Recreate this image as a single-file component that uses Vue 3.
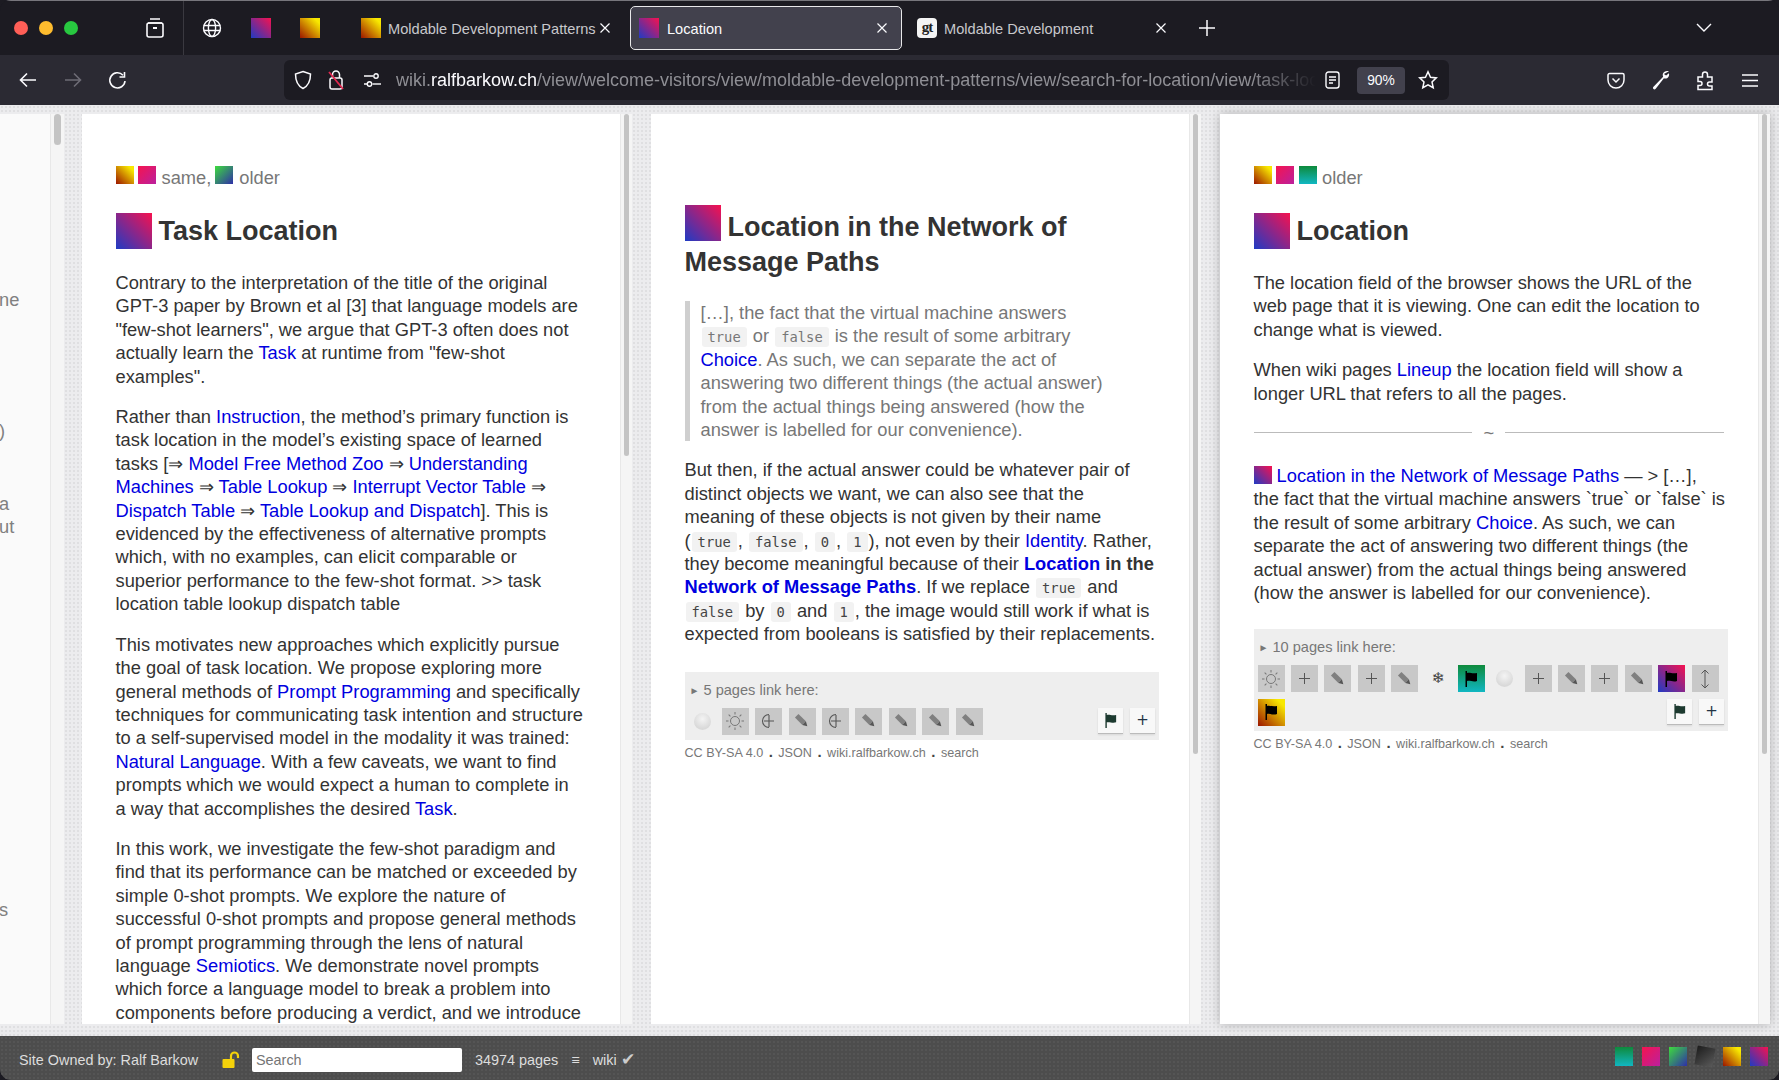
<script setup>
const leftLines = [
  { t: 'ne', gap: 173 },
  { t: ')', gap: 108 },
  { t: 'a', gap: 49 },
  { t: 'ut', gap: 0 },
  { t: 's', gap: 359 },
]
const links2 = [
  { k: 'orb' }, { k: 'sun' }, { k: 'arc' }, { k: 'pen' }, { k: 'arc' }, { k: 'pen' }, { k: 'pen' }, { k: 'pen' }, { k: 'pen' },
]
const links3 = [
  { k: 'sun' }, { k: 'plus' }, { k: 'pen' }, { k: 'plus' }, { k: 'pen' }, { k: 'snow' }, { k: 'flag', g: 'g-teal' }, { k: 'orb' },
  { k: 'plus' }, { k: 'pen' }, { k: 'plus' }, { k: 'pen' }, { k: 'flag', g: 'g-loc' }, { k: 'arrows' }, { k: 'flag', g: 'g-yellow' },
]
const factories = { two: links2, three: links3 }
const rays = [0, 45, 90, 135, 180, 225, 270, 315]
</script>

<template>
  <div class="window">
    <header class="tabbar">
      <div class="lights">
        <i class="light red"></i><i class="light amber"></i><i class="light green"></i>
      </div>
      <svg class="ico archive" width="20" height="22" viewBox="0 0 20 22" fill="none" stroke="#fbfbfe" stroke-width="1.6">
        <path d="M5 2h10M3 6h14" /><rect x="2" y="6" width="16" height="14" rx="2" /><path d="M8 11h4" stroke-width="2" />
      </svg>
      <div class="divider"></div>
      <svg class="ico globe" width="20" height="20" viewBox="0 0 20 20" fill="none" stroke="#fbfbfe" stroke-width="1.4">
        <circle cx="10" cy="10" r="8.5" /><ellipse cx="10" cy="10" rx="3.6" ry="8.5" /><path d="M1.5 7.5h17M1.5 12.5h17" />
      </svg>
      <i class="fav g-loc pin1"></i>
      <i class="fav g-yellow pin2"></i>
      <div class="tab t1">
        <i class="fav g-yellow"></i><span class="tab-title">Moldable Development Patterns</span>
        <svg class="x" width="12" height="12" viewBox="0 0 12 12" stroke="#fbfbfe" stroke-width="1.2"><path d="M1.5 1.5l9 9M10.5 1.5l-9 9" /></svg>
      </div>
      <div class="tab active">
        <i class="fav g-loc"></i><span class="tab-title">Location</span>
        <svg class="x" width="12" height="12" viewBox="0 0 12 12" stroke="#fbfbfe" stroke-width="1.2"><path d="M1.5 1.5l9 9M10.5 1.5l-9 9" /></svg>
      </div>
      <div class="tab t3">
        <i class="fav gt">gt</i><span class="tab-title">Moldable Development</span>
        <svg class="x" width="12" height="12" viewBox="0 0 12 12" stroke="#fbfbfe" stroke-width="1.2"><path d="M1.5 1.5l9 9M10.5 1.5l-9 9" /></svg>
      </div>
      <svg class="ico newtab" width="16" height="16" viewBox="0 0 16 16" stroke="#fbfbfe" stroke-width="1.5"><path d="M8 0v16M0 8h16" /></svg>
      <svg class="ico chevron" width="16" height="10" viewBox="0 0 16 10" fill="none" stroke="#fbfbfe" stroke-width="1.4"><path d="M1 1l7 7 7-7" /></svg>
    </header>

    <nav class="toolbar">
      <svg class="ico back" width="18" height="16" viewBox="0 0 18 16" fill="none" stroke="#fbfbfe" stroke-width="1.6"><path d="M17 8H2M8 1.5L1.5 8 8 14.5" /></svg>
      <svg class="ico fwd" width="18" height="16" viewBox="0 0 18 16" fill="none" stroke="#6d6c75" stroke-width="1.6"><path d="M1 8h15M10 1.5L16.5 8 10 14.5" /></svg>
      <svg class="ico reload" width="19" height="19" viewBox="0 0 19 19" fill="none" stroke="#fbfbfe" stroke-width="1.6"><path d="M15 4.2A7.6 7.6 0 1 0 17 10" /><path d="M16.5 1v5h-5" /></svg>
      <div class="urlbar">
        <svg class="ico shield" width="18" height="20" viewBox="0 0 18 20" fill="none" stroke="#fbfbfe" stroke-width="1.5"><path d="M9 1.5l7.5 2.5c0 7-1.500 11.500-7.500 14.500C3 15.500 1.500 11 1.500 4z" /></svg>
        <svg class="ico lock" width="18" height="22" viewBox="0 0 18 22" fill="none" stroke-width="1.5"><rect x="3" y="9" width="12" height="11" rx="2" stroke="#fbfbfe" /><path d="M5.500 9V5.500a3.500 3.500 0 0 1 7 0V9" stroke="#fbfbfe" /><path d="M2 3l14 17" stroke="#e22850" stroke-width="1.800" /></svg>
        <svg class="ico tune" width="19" height="14" viewBox="0 0 19 14" fill="none" stroke="#fbfbfe" stroke-width="1.400"><circle cx="13" cy="3" r="2.200" /><path d="M1 3h9M1 11h3" /><circle cx="6.500" cy="11" r="2.200" /><path d="M9.500 11H18" /></svg>
        <div class="url"><span class="dim">wiki.</span><b>ralfbarkow.ch</b><span class="dim">/view/welcome-visitors/view/moldable-development-patterns/view/search-for-location/view/task-location</span></div>
        <svg class="ico reader" width="15" height="18" viewBox="0 0 15 18" fill="none" stroke="#fbfbfe" stroke-width="1.400"><rect x="1" y="1" width="13" height="16" rx="2.500" /><path d="M4 6h7M4 9h7M4 12h4" /></svg>
        <div class="zoompill">90%</div>
        <svg class="ico star" width="20" height="20" viewBox="0 0 20 20" fill="none" stroke="#fbfbfe" stroke-width="1.500"><path d="M10 1.800l2.500 5.400 5.800.7-4.300 4 1.200 5.800L10 14.800l-5.200 2.900L6 11.900l-4.300-4 5.800-.7z" /></svg>
      </div>
      <svg class="ico pocket" width="18" height="17" viewBox="0 0 18 17" fill="none" stroke="#fbfbfe" stroke-width="1.500"><path d="M2.500 1.500h13a1.500 1.500 0 0 1 1.500 1.500v5a8 8 0 0 1-16 0V3a1.500 1.500 0 0 1 1.500-1.500z" /><path d="M5.500 6.500L9 10l3.500-3.500" /></svg>
      <svg class="ico wrench" width="18" height="20" viewBox="0 0 18 20" fill="#fbfbfe"><path d="M17 1.200c-2.500-.8-5.200 0-6 2.300-.4 1.100-.3 2.300.2 3.300L1.500 16.800c-.7.800-.7 1.700 0 2.300.7.500 1.500.4 2.200-.4l8.200-10.400c2.200.7 4.300-.4 5-2.400.3-.9.300-1.800 0-2.600l-2.800 2.200-2.200-1.500z" /></svg>
      <svg class="ico puzzle" width="19" height="21" viewBox="0 0 19 21" fill="none" stroke="#fbfbfe" stroke-width="1.500"><path d="M2 7h4.500V4.500a2.500 2.500 0 0 1 5 0V7H16v5h-2.500a2 2 0 0 0 0 4H16v3.500H2v-4h2a2 2 0 0 0 0-4H2z" /></svg>
      <svg class="ico menu" width="16" height="13" viewBox="0 0 16 13" stroke="#fbfbfe" stroke-width="1.500"><path d="M0 1h16M0 6.500h16M0 12h16" /></svg>
    </nav>

    <main class="neighborhood">
      <section class="stub">
        <div class="stub-page">
          <div v-for="l in leftLines" :key="l.t" class="stub-line" :style="{ marginTop: l.gap + 'px' }">{{ l.t }}</div>
        </div>
        <div class="track"><i class="thumb" style="height: 31px"></i></div>
      </section>

      <section class="pane">
        <article class="page">
          <div class="flags">
            <i class="mini g-yellow"></i><i class="mini g-pink"></i><span class="muted">same,</span><i class="mini g-greenblue"></i><span class="muted">older</span>
          </div>
          <h3 class="title"><i class="big g-loc"></i>Task Location</h3>
          <p>Contrary to the interpretation of the title of the original <span class="nowrap">GPT-3</span> paper by Brown et al [3] that language models are <span class="nowrap">"few-shot</span> learners", we argue that <span class="nowrap">GPT-3</span> often does not actually learn the <a>Task</a> at runtime from <span class="nowrap">"few-shot</span> examples".</p>
          <p>Rather than <a>Instruction</a>, the method’s primary function is task location in the model’s existing space of learned tasks [⇒ <a>Model Free Method Zoo</a> ⇒ <a>Understanding Machines</a> ⇒ <a>Table Lookup</a> ⇒ <a>Interrupt Vector Table</a> ⇒ <a>Dispatch Table</a> ⇒ <a>Table Lookup and Dispatch</a>]. This is evidenced by the effectiveness of alternative prompts which, with no examples, can elicit comparable or superior performance to the few-shot format. &gt;&gt; task location table lookup dispatch table</p>
          <p>This motivates new approaches which explicitly pursue the goal of task location. We propose exploring more general methods of <a>Prompt Programming</a> and specifically techniques for communicating task intention and structure to a self-supervised model in the modality it was trained: <a>Natural Language</a>. With a few caveats, we want to find prompts which we would expect a human to complete in <span class="nowrap">a way</span> that accomplishes the desired <a>Task</a>.</p>
          <p>In this work, we investigate the few-shot paradigm and find that its performance can be matched or exceeded by simple 0-shot prompts. We explore the nature of successful 0-shot prompts and propose general methods of prompt programming through the lens of natural language <a>Semiotics</a>. We demonstrate novel prompts which force a language model to break a problem into components before producing a verdict, and we introduce</p>
        </article>
        <div class="track"><i class="thumb" style="height: 342px"></i></div>
      </section>

      <section class="pane">
        <article class="page second">
          <h3 class="title wrap"><i class="big g-loc"></i>Location in the Network of Message Paths</h3>
          <blockquote>[…], the fact that the virtual machine answers <code>true</code> or <code>false</code> is the result of some arbitrary <a>Choice</a>. As such, we can separate the act of answering two different things (the actual answer) from the actual things being answered (how the answer is labelled for our convenience).</blockquote>
          <p>But then, if the actual answer could be whatever pair of distinct objects we want, we can also see that the meaning of these objects is not given by their name (<code>true</code>, <code>false</code>, <code>0</code>, <code>1</code>), not even by their <a>Identity</a>. Rather, they become meaningful because of their <strong><a>Location</a> in the <a>Network of Message Paths</a></strong>. If we replace <code>true</code> and <code>false</code> by <code>0</code> and <code>1</code>, the image would still work if what is expected from booleans is satisfied by their replacements.</p>
          <div class="factory f2">
            <div class="factory-head"><span class="tri">►</span> 5 pages link here:</div>
            <div class="chips">
              <template v-for="(c, i) in factories.two" :key="i">
                <i v-if="c.k === 'orb'" class="chip orb"></i>
                <i v-else class="chip">
                  <svg v-if="c.k === 'arc'" width="16" height="18" viewBox="0 0 16 18" fill="none" stroke="#555" stroke-width="1.100"><path d="M8 2.500a6.500 6.500 0 0 0 0 13" /><path d="M3 9h10M8 3v12" /></svg>
                  <svg v-else-if="c.k === 'pen'" width="18" height="18" viewBox="0 0 18 18"><g transform="rotate(-45 9 9)"><rect x="6.500" y="1.500" width="5" height="10.500" fill="#808080" /><path d="M6.500 12h5L9 16.500z" fill="#555" /></g></svg>
                  <svg v-else width="20" height="20" viewBox="0 0 20 20" fill="none" stroke="#777" stroke-width="1"><circle cx="10" cy="10" r="4.500" /><path v-for="r in rays" :key="r" d="M10 3.500V1" :transform="`rotate(${r} 10 10)`" /></svg>
                </i>
              </template>
              <div class="actions">
                <i class="act"><svg width="14" height="15" viewBox="0 0 15 16"><path d="M1.500 0h1.500v2c3-1 5 1.200 10 0v8c-4 1.500-7-1-10 0v6H1.500z" fill="#1d3a30" /></svg></i>
                <i class="act">+</i>
              </div>
            </div>
          </div>
          <div class="license">CC BY-SA 4.0 <b>.</b> JSON <b>.</b> wiki.ralfbarkow.ch <b>.</b> search</div>
        </article>
        <div class="track"><i class="thumb" style="height: 640px"></i></div>
      </section>

      <section class="pane active-pane">
        <article class="page">
          <div class="flags tight">
            <i class="mini g-yellow"></i><i class="mini g-pink"></i><i class="mini g-teal"></i><span class="muted">older</span>
          </div>
          <h3 class="title"><i class="big g-loc"></i>Location</h3>
          <p>The location field of the browser shows the URL of the web page that it is viewing. One can edit the location to change what is viewed.</p>
          <p>When wiki pages <a>Lineup</a> the location field will show a longer URL that refers to all the pages.</p>
          <div class="sep"><span></span><em>~</em><span></span></div>
          <p class="ref"><i class="mini g-loc inline"></i> <a>Location in the Network of Message Paths</a> — &gt; […], the fact that the virtual machine answers `true` or `false` is the result of some arbitrary <a>Choice</a>. As such, we can separate the act of answering two different things (the actual answer) from the actual things being answered (how the answer is labelled for our convenience).</p>
          <div class="factory f3">
            <div class="factory-head"><span class="tri">►</span> 10 pages link here:</div>
            <div class="chips">
              <template v-for="(c, i) in factories.three" :key="i">
                <i v-if="c.k === 'orb'" class="chip orb"></i>
                <i v-else-if="c.k === 'snow'" class="chip plain">❄</i>
                <i v-else class="chip" :class="c.g">
                  <svg v-if="c.k === 'pen'" width="18" height="18" viewBox="0 0 18 18"><g transform="rotate(-45 9 9)"><rect x="6.500" y="1.500" width="5" height="10.500" fill="#808080" /><path d="M6.500 12h5L9 16.500z" fill="#555" /></g></svg>
                  <svg v-else-if="c.k === 'sun'" width="20" height="20" viewBox="0 0 20 20" fill="none" stroke="#777" stroke-width="1"><circle cx="10" cy="10" r="4.500" /><path v-for="r in rays" :key="r" d="M10 3.500V1" :transform="`rotate(${r} 10 10)`" /></svg>
                  <svg v-else-if="c.k === 'plus'" width="11" height="11" viewBox="0 0 11 11" stroke="#555" stroke-width="1"><path d="M5.500 0v11M0 5.500h11" /></svg>
                  <svg v-else-if="c.k === 'flag'" width="15" height="16" viewBox="0 0 15 16"><path d="M1.500 0h1.500v2c3-1 5 1.200 10 0v8c-4 1.500-7-1-10 0v6H1.500z" fill="#000" /></svg>
                  <svg v-else width="10" height="20" viewBox="0 0 10 20" fill="none" stroke="#555" stroke-width="1"><path d="M5 1v18M1.500 4.500L5 1l3.500 3.500M1.500 15.500L5 19l3.500-3.500" /></svg>
                </i>
              </template>
              <div class="actions">
                <i class="act"><svg width="14" height="15" viewBox="0 0 15 16"><path d="M1.500 0h1.500v2c3-1 5 1.200 10 0v8c-4 1.500-7-1-10 0v6H1.500z" fill="#1d3a30" /></svg></i>
                <i class="act">+</i>
              </div>
            </div>
          </div>
          <div class="license">CC BY-SA 4.0 <b>.</b> JSON <b>.</b> wiki.ralfbarkow.ch <b>.</b> search</div>
        </article>
        <div class="track"><i class="thumb" style="height: 640px"></i></div>
      </section>
    </main>

    <footer class="status">
      <span class="owner">Site Owned by: Ralf Barkow</span>
      <svg class="padlock" width="18" height="18" viewBox="0 0 18 18"><rect x="0.500" y="8" width="12" height="9" rx="1" fill="#f5d20a" /><path d="M9 8V5a3.500 3.500 0 0 1 7 0v2" fill="none" stroke="#f5d20a" stroke-width="2.200" /></svg>
      <div class="search">Search</div>
      <span class="count">34974 pages</span>
      <span class="burger">≡</span>
      <span class="wiki">wiki <em>✔</em></span>
      <div class="neigh">
        <i class="nb g-teal"></i><i class="nb g-pink"></i><i class="nb g-greenblue"></i><i class="nb g-dark"></i><i class="nb g-yellow"></i><i class="nb g-loc"></i>
      </div>
    </footer>
  </div>
</template>

<style>
html, body { margin: 0; background: #1c1b22; overflow: hidden; }
</style>

<style scoped>
.window {
  width: 1779px; height: 1080px; display: flex; flex-direction: column; overflow: hidden;
  border-radius: 11px; background: #1c1b22; font-family: "Liberation Sans", Arial, sans-serif;
}
i { font-style: normal; display: block; flex: none; }
.ico { flex: none; display: block; }
.nowrap { white-space: nowrap; }

/* tab strip */
.tabbar { height: 55px; flex: none; display: flex; align-items: center; background: #1c1b22; box-shadow: inset 0 1px 0 #77767c; color: #fbfbfe; }
.lights { display: flex; gap: 11px; margin-left: 14px; }
.light { width: 14px; height: 14px; border-radius: 50%; }
.red { background: #ff5f57; } .amber { background: #febc2e; } .green { background: #28c840; }
.archive { margin-left: 67px; }
.divider { width: 1px; height: 54px; background: #3a3940; margin-left: 18px; }
.globe { margin-left: 18px; }
.fav { width: 20px; height: 20px; }
.pin1 { margin-left: 29px; }
.pin2 { margin-left: 29px; }
.tab { height: 44px; display: flex; align-items: center; box-sizing: border-box; font-size: 14.600px; }
.tab-title { padding-top: 2px; }
.t1 { width: 270px; margin-left: 41px; color: #c8c8cc; }
.t1 .tab-title { width: 211px; margin-left: 7px; white-space: nowrap; overflow: hidden; }
.active { width: 272px; margin-left: -1px; background: #42414d; border: 1px solid #e8e8ea; border-radius: 5px; padding-left: 8px; color: #fbfbfe; }
.active .tab-title { margin-left: 8px; width: 209px; }
.t3 { width: 252px; margin-left: 15px; color: #c8c8cc; }
.t3 .tab-title { margin-left: 7px; width: 211px; }
.gt { background: #f4f4f4; color: #222; border-radius: 4px; font-size: 15px; font-weight: 700; line-height: 18px; text-align: center; font-family: "Liberation Serif", serif; letter-spacing: -1px; }
.tab .x { flex: none; }
.newtab { margin-left: 30px; }
.chevron { margin-left: 481px; }

/* navigation */
.toolbar { height: 50px; flex: none; display: flex; align-items: center; background: #2b2a33; }
.back { margin-left: 19px; }
.fwd { margin-left: 27px; }
.reload { margin-left: 26px; }
.urlbar { width: 1165px; height: 40px; margin-left: 157px; border-radius: 6px; background: #1c1b22; display: flex; align-items: center; box-sizing: border-box; color: #fbfbfe; position: relative; }
.shield { margin-left: 10px; }
.lock { margin-left: 15px; }
.tune { margin-left: 18px; }
.url { width: 920px; margin-left: 14px; font-size: 18px; white-space: nowrap; overflow: hidden; flex: none; -webkit-mask-image: linear-gradient(to right, #000 93%, transparent); mask-image: linear-gradient(to right, #000 93%, transparent); }
.url b { font-weight: 400; color: #fbfbfe; }
.dim { color: #8f8f95; }
.reader { margin-left: 9px; }
.zoompill { width: 48px; height: 27px; margin-left: 17px; border-radius: 4px; background: #42414d; font-size: 13.800px; line-height: 27px; text-align: center; flex: none; }
.star { margin-left: 13px; }
.pocket { margin-left: 158px; }
.wrench { margin-left: 27px; }
.puzzle { margin-left: 26px; }
.menu { margin-left: 27px; }

/* page lineup */
.neighborhood {
  flex: 1; min-height: 0; display: flex; padding-top: 9px; box-sizing: border-box; overflow: hidden;
  background-color: #ececee;
  background-image: radial-gradient(#dfdfe1 1px, transparent 1.300px);
  background-size: 4px 4px;
}
.stub { width: 64px; height: 910px; display: flex; flex: none; margin-right: 18px; }
.stub-page { width: 50px; background: #fafafa; overflow: hidden; padding-top: 1px; font-size: 18.300px; line-height: 23.400px; color: #808080; }
.stub-line { margin-left: -1px; }
.pane { width: 550px; height: 910px; flex: none; display: flex; margin-right: 19px; }
.active-pane { box-shadow: 0 0 10px rgba(0, 0, 0, .25); }
.page { width: 538px; height: 910px; box-sizing: border-box; overflow: hidden; background: #fff; padding: 52px 33px 0 33.500px; color: #333; font-size: 18.300px; line-height: 23.400px; flex: none; }
.second { padding-top: 91px; }
.track { flex: 1; background: #f5f5f5; box-sizing: border-box; padding: 0 3px; border-left: 1px solid #e8e8e8; }
.thumb { background: #c4c4c4; border-radius: 4px; }
.flags { display: flex; align-items: flex-start; height: 28px; color: #777; }
.mini { width: 18px; height: 18px; }
.flags .mini { margin-right: 4px; }
.flags .mini + .muted { margin-left: 2px; }
.flags .muted { line-height: 24px; margin-right: 4px; }
.tight .mini { margin-right: 4.500px; }
.tight .mini + .muted { margin-left: 1px; }
.title { margin: 19px 0 0; font-size: 27px; line-height: 36px; font-weight: 700; color: #333; display: flex; align-items: center; height: 36px; }
.big { width: 36px; height: 36px; margin-right: 7px; }
.title.wrap { display: block; height: auto; line-height: 35px; margin: 0 0 21px; }
.title.wrap .big { display: inline-block; vertical-align: -5px; margin-right: 7px; }
p { margin: 17px 0; }
.title + p { margin-top: 22px; }
a { color: #0000e0; text-decoration: none; }
code { font-family: "DejaVu Sans Mono", monospace; font-size: 13.800px; line-height: 1; background: #f2f2f2; padding: 2px 6px; border-radius: 3px; margin: 0 1px; }
p code { color: #444; }
blockquote { margin: 0 0 17px; padding: 0 52px 0 11px; border-left: 5px solid #cfcfcf; color: #777; }
.sep { display: flex; align-items: center; gap: 11px; height: 23px; margin: -1px 1px 20px 0; color: #777; }
.sep span { flex: 1; height: 1px; background: #bbb; }
.sep em { font-style: normal; }
.ref { margin: 0; }
.inline { display: inline-block; vertical-align: -2px; }
.factory { background: #eee; padding: 8px 4px 5px 4px; margin: 0 -3px 0 0; }
.f2 { margin-top: 26px; }
.f3 { margin-top: 25px; }
.factory-head { font-size: 14.600px; line-height: 20px; color: #777; padding-left: 1px; }
.tri { font-size: 10px; vertical-align: 1px; }
.chips { display: flex; flex-wrap: wrap; gap: 6.400px; margin-top: 7px; align-items: center; }
.chip { width: 27px; height: 27px; background: #c8c8c8; color: #444; font-size: 16px; line-height: 27px; text-align: center; display: flex; align-items: center; justify-content: center; font-family: "DejaVu Sans", sans-serif; }
.chip.plain { background: transparent; font-size: 15px; }
.chip.orb { background: radial-gradient(circle at 50% 35%, #f4f4f4, #d9d9d9 70%); width: 17px; height: 17px; border-radius: 50%; margin: 0 5px; }
.actions { margin-left: auto; display: flex; gap: 7px; }
.act { width: 25px; height: 26px; background: #f8f8f8; border-bottom: 1px solid #bbb; box-sizing: border-box; color: #234; font-size: 15px; line-height: 25px; text-align: center; font-family: "DejaVu Sans", sans-serif; box-shadow: 0 1px 2px rgba(0, 0, 0, .1); display: flex; align-items: center; justify-content: center; }
.license { font-size: 12.600px; line-height: 18px; color: #777; margin-top: 3px; }
.license b { color: #444; margin: 0 2px; font-size: 15px; }

/* status bar */
.status {
  height: 44px; flex: none; display: flex; align-items: center; color: #ddd; font-size: 14.400px; padding-top: 3px; box-sizing: border-box;
  background-color: #4d4d4d;
  background-image: radial-gradient(#555 1px, transparent 1.300px);
  background-size: 4px 4px;
}
.owner { margin-left: 19px; width: 203px; flex: none; white-space: nowrap; }
.padlock { flex: none; }
.search { width: 210px; height: 24px; flex: none; margin-left: 12px; background: #fff; border-radius: 2px; box-sizing: border-box; padding-left: 4px; color: #757575; line-height: 24px; }
.count { margin-left: 13px; flex: none; }
.burger { margin-left: 13px; flex: none; }
.wiki { margin-left: 13px; flex: none; }
.wiki em { font-style: normal; font-size: 17px; color: #ccc; }
.neigh { margin-left: auto; margin-right: 11px; display: flex; gap: 9px; margin-top: -6px; }
.nb { width: 18px; height: 19px; }

.g-loc { background: linear-gradient(to top right, #1f3bc4, #f7114f); }
.g-yellow { background: linear-gradient(to bottom left, #f8e800 15%, #9c1500); }
.g-pink { background: linear-gradient(to bottom right, #f5144f, #bb209e); }
.g-greenblue { background: linear-gradient(to bottom right, #3ddc3d, #2f2fa8); }
.g-teal { background: linear-gradient(to bottom, #0e8a3c, #11b7c2); }
.g-dark { background: linear-gradient(to bottom right, #1c1c1c, #5a5a5a); transform: rotate(10deg); }
</style>
